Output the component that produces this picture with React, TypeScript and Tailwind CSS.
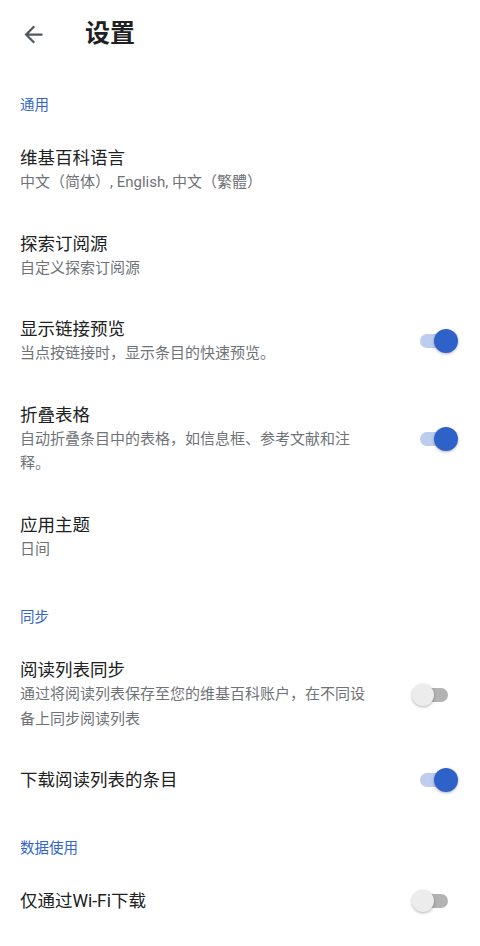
import React from 'react';

type Item = {
  title: string;
  summary?: string;
  toggle?: boolean;
};

type Section = {
  header: string;
  items: Item[];
};

const sections: Section[] = [
  {
    header: '通用',
    items: [
      { title: '维基百科语言', summary: '中文（简体）, English, 中文（繁體）' },
      { title: '探索订阅源', summary: '自定义探索订阅源' },
      { title: '显示链接预览', summary: '当点按链接时，显示条目的快速预览。', toggle: true },
      { title: '折叠表格', summary: '自动折叠条目中的表格，如信息框、参考文献和注释。', toggle: true },
      { title: '应用主题', summary: '日间' },
    ],
  },
  {
    header: '同步',
    items: [
      { title: '阅读列表同步', summary: '通过将阅读列表保存至您的维基百科账户，在不同设备上同步阅读列表', toggle: false },
      { title: '下载阅读列表的条目', toggle: true },
    ],
  },
  {
    header: '数据使用',
    items: [{ title: '仅通过Wi-Fi下载', toggle: false }],
  },
];

function Switch({ on }: { on: boolean }) {
  return (
    <div className="relative h-[24px] w-[46px] shrink-0">
      {on ? (
        <>
          <span className="absolute left-[8px] top-[5px] h-[14px] w-[34px] rounded-full bg-[#bccdf0]" />
          <span className="absolute right-0 top-0 h-[24px] w-[24px] rounded-full bg-[#2f62c8] shadow-[0_1px_3px_rgba(0,0,0,0.3)]" />
        </>
      ) : (
        <>
          <span className="absolute left-[2px] top-[5px] h-[14px] w-[34px] rounded-full bg-[#b3b3b3]" />
          <span className="absolute left-0 top-[1px] h-[22px] w-[22px] rounded-full bg-[#ececec] shadow-[0_1px_3px_rgba(0,0,0,0.3)]" />
        </>
      )}
    </div>
  );
}

export default function App() {
  return (
    <div
      className="min-h-[946px] w-full bg-white"
      style={{ fontFamily: 'Roboto, "Noto Sans CJK SC", sans-serif' }}
    >
      <header className="flex h-[68px] items-center pl-[19px]">
        <button className="flex h-[28px] w-[28px] items-center justify-center text-[#54595d]">
          <svg viewBox="0 0 24 24" width="27" height="27" fill="currentColor">
            <path d="M20 11H7.83l5.59-5.59L12 4l-8 8 8 8 1.41-1.41L7.83 13H20v-2z" />
          </svg>
        </button>
        <h1 className="ml-[38px] text-[25px] font-bold text-[#202122]">设置</h1>
      </header>

      {sections.map((section) => (
        <section key={section.header}>
          <h2 className="px-[20px] pb-[12px] pt-[28px] text-[14.5px] leading-[20px] text-[#3366cc]">
            {section.header}
          </h2>
          {section.items.map((item) => (
            <div key={item.title} className="flex items-center pb-[19px] pl-[20px] pr-[22px] pt-[18px]">
              <div className="min-w-0 flex-1 pr-[40px]">
                <div className="text-[17.5px] leading-[24px] text-[#202122]">{item.title}</div>
                {item.summary && (
                  <div className="text-[15px] leading-[24.5px] text-[#6f7378]">{item.summary}</div>
                )}
              </div>
              {item.toggle !== undefined && <Switch on={item.toggle} />}
            </div>
          ))}
        </section>
      ))}
    </div>
  );
}
